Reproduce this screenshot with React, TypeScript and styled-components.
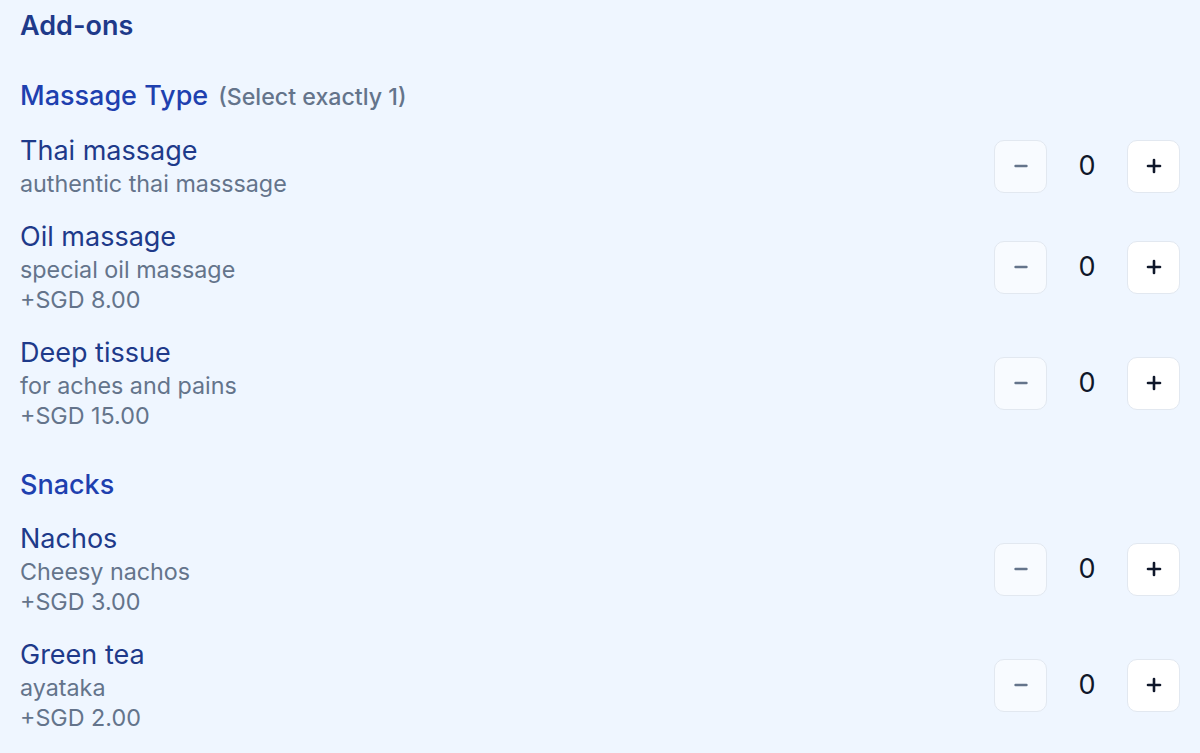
import React from "react";
import styled, { createGlobalStyle } from "styled-components";

const GlobalStyle = createGlobalStyle`
  html, body {
    margin: 0;
    padding: 0;
    background: #eff6ff;
  }
  body {
    font-family: Inter, "Noto Sans", "Liberation Sans", sans-serif;
    -webkit-font-smoothing: antialiased;
  }
  * { box-sizing: border-box; }
`;

const Page = styled.div`
  min-height: 753px;
  background: #eff6ff;
  padding: 10px 20px 20px 20px;
  display: flex;
  flex-direction: column;
`;

const Title = styled.h1`
  margin: 0;
  font-size: 27px;
  line-height: 32px;
  font-weight: 600;
  color: #1e3a8a;
`;

const Section = styled.section`
  margin-top: 38px;
  display: flex;
  flex-direction: column;
  gap: 20px;
`;

const SectionHeading = styled.h2`
  margin: 0;
  font-size: 27px;
  line-height: 32px;
  font-weight: 500;
  color: #1e40af;
  display: flex;
  align-items: baseline;
  gap: 10px;
`;

const Hint = styled.span`
  font-size: 23.2px;
  font-weight: 500;
  color: #64748b;
`;

const ItemRow = styled.div`
  display: flex;
  align-items: center;
  justify-content: space-between;
  gap: 24px;
`;

const ItemInfo = styled.div`
  display: flex;
  flex-direction: column;
`;

const ItemName = styled.div`
  font-size: 27px;
  line-height: 36px;
  font-weight: 400;
  color: #1e3a8a;
`;

const ItemMeta = styled.div`
  font-size: 23.3px;
  line-height: 30px;
  font-weight: 400;
  color: #64748b;
`;

const Stepper = styled.div`
  display: flex;
  align-items: center;
  gap: 20px;
`;

const StepButton = styled.button<{ $disabled?: boolean }>`
  width: 53px;
  height: 53px;
  border-radius: 10px;
  border: 1px solid #e2e8f0;
  background: ${(p) => (p.$disabled ? "#f8fbff" : "#ffffff")};
  color: ${(p) => (p.$disabled ? "#64748b" : "#0f172a")};
  display: flex;
  align-items: center;
  justify-content: center;
  padding: 0;
  cursor: ${(p) => (p.$disabled ? "default" : "pointer")};
`;

const Count = styled.span`
  width: 40px;
  text-align: center;
  font-size: 27px;
  line-height: 32px;
  color: #0f172a;
`;

const MinusIcon = () => (
  <svg width="16" height="16" viewBox="0 0 16 16">
    <line x1="2.5" y1="8" x2="13.5" y2="8" stroke="currentColor" strokeWidth="2.4" strokeLinecap="round" />
  </svg>
);

const PlusIcon = () => (
  <svg width="16" height="16" viewBox="0 0 16 16">
    <line x1="2" y1="8" x2="14" y2="8" stroke="currentColor" strokeWidth="2.6" strokeLinecap="round" />
    <line x1="8" y1="2" x2="8" y2="14" stroke="currentColor" strokeWidth="2.6" strokeLinecap="round" />
  </svg>
);

type Item = { name: string; desc: string; price?: string };

const sections: { title: string; hint?: string; items: Item[] }[] = [
  {
    title: "Massage Type",
    hint: "(Select exactly 1)",
    items: [
      { name: "Thai massage", desc: "authentic thai masssage" },
      { name: "Oil massage", desc: "special oil massage", price: "+SGD 8.00" },
      { name: "Deep tissue", desc: "for aches and pains", price: "+SGD 15.00" },
    ],
  },
  {
    title: "Snacks",
    items: [
      { name: "Nachos", desc: "Cheesy nachos", price: "+SGD 3.00" },
      { name: "Green tea", desc: "ayataka", price: "+SGD 2.00" },
    ],
  },
];

export default function App() {
  return (
    <>
      <GlobalStyle />
      <Page>
        <Title>Add-ons</Title>
        {sections.map((s) => (
          <Section key={s.title}>
            <SectionHeading>
              {s.title}
              {s.hint && <Hint>{s.hint}</Hint>}
            </SectionHeading>
            {s.items.map((it) => (
              <ItemRow key={it.name}>
                <ItemInfo>
                  <ItemName>{it.name}</ItemName>
                  <ItemMeta>{it.desc}</ItemMeta>
                  {it.price && <ItemMeta>{it.price}</ItemMeta>}
                </ItemInfo>
                <Stepper>
                  <StepButton $disabled aria-label="decrease">
                    <MinusIcon />
                  </StepButton>
                  <Count>0</Count>
                  <StepButton aria-label="increase">
                    <PlusIcon />
                  </StepButton>
                </Stepper>
              </ItemRow>
            ))}
          </Section>
        ))}
      </Page>
    </>
  );
}
